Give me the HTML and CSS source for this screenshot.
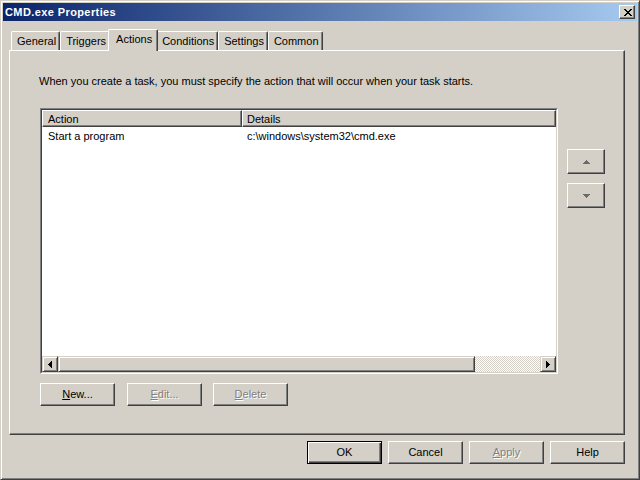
FILE: index.html
```html
<!DOCTYPE html>
<html lang="en">
<head>
<meta charset="utf-8">
<title>CMD.exe Properties</title>
<link rel="stylesheet" href="styles.css">
</head>
<body>
<div class="window">
  <div class="titlebar">
    <span class="title">CMD.exe Properties</span>
    <button class="close-btn" aria-label="Close">
      <svg width="8" height="7" viewBox="0 0 8 7" shape-rendering="crispEdges"><path d="M0 0h2v1H0zM6 0h2v1H6zM1 1h2v1H1zM5 1h2v1H5zM2 2h4v1H2zM3 3h2v1H3zM2 4h4v1H2zM1 5h2v1H1zM5 5h2v1H5zM0 6h2v1H0zM6 6h2v1H6z" fill="#000"/></svg>
    </button>
  </div>
  <div class="client">
    <div class="tabs">
      <div class="tab">General</div>
      <div class="tab">Triggers</div>
      <div class="tab selected">Actions</div>
      <div class="tab">Conditions</div>
      <div class="tab">Settings</div>
      <div class="tab">Common</div>
    </div>
    <div class="panel">
      <p class="intro">When you create a task, you must specify the action that will occur when your task starts.</p>
      <div class="content">
        <div class="listview">
          <div class="listview-inner">
            <div class="lv-header">
              <div class="lv-col col-action">Action</div>
              <div class="lv-col col-details">Details</div>
            </div>
            <div class="lv-body">
              <div class="lv-row">
                <div class="cell col-action">Start a program</div>
                <div class="cell col-details">c:\windows\system32\cmd.exe</div>
              </div>
            </div>
            <div class="hscroll">
              <div class="sb-btn"><svg width="4" height="7" viewBox="0 0 4 7" shape-rendering="crispEdges"><path d="M0 3h1v1H0zM1 2h1v3H1zM2 1h1v5H2zM3 0h1v7H3z" fill="#000"/></svg></div>
              <div class="sb-track"><div class="sb-thumb"></div></div>
              <div class="sb-btn"><svg width="4" height="7" viewBox="0 0 4 7" shape-rendering="crispEdges"><path d="M3 3h1v1H3zM2 2h1v3H2zM1 1h1v5H1zM0 0h1v7H0z" fill="#000"/></svg></div>
            </div>
          </div>
        </div>
        <div class="updown">
          <button class="btn arrow-btn" aria-label="Move up"><svg width="7" height="4" viewBox="0 0 7 4" shape-rendering="crispEdges"><path d="M3 0h1v1H3zM2 1h3v1H2zM1 2h5v1H1zM0 3h7v1H0z" fill="#6b6b6b"/></svg></button>
          <button class="btn arrow-btn" aria-label="Move down"><svg width="7" height="4" viewBox="0 0 7 4" shape-rendering="crispEdges"><path d="M0 0h7v1H0zM1 1h5v1H1zM2 2h3v1H2zM3 3h1v1H3z" fill="#6b6b6b"/></svg></button>
        </div>
      </div>
      <div class="task-buttons">
        <button class="btn btn-new"><u>N</u>ew...</button>
        <button class="btn disabled"><u>E</u>dit...</button>
        <button class="btn disabled"><u>D</u>elete</button>
      </div>
    </div>
    <div class="footer">
      <button class="btn default">OK</button>
      <button class="btn">Cancel</button>
      <button class="btn disabled"><u>A</u>pply</button>
      <button class="btn">Help</button>
    </div>
  </div>
</div>
</body>
</html>
```

FILE: styles.css
```css
html, body {
  margin: 0;
  padding: 0;
  background: #D4D0C8;
}

body {
  font-family: "Liberation Sans", Arial, sans-serif;
  font-size: 11px;
  color: #000;
}

.window {
  width: 640px;
  height: 480px;
  box-sizing: border-box;
  background: #D4D0C8;
  border: 1px solid;
  border-color: #D4D0C8 #404040 #404040 #D4D0C8;
  box-shadow: inset 1px 1px #fff, inset -1px -1px #808080;
  padding: 2px;
  display: flex;
  flex-direction: column;
}

.titlebar {
  height: 18px;
  flex: none;
  background: linear-gradient(to right, #0A246A, #A6CAF0);
  display: flex;
  align-items: center;
  justify-content: space-between;
  padding: 0 2px;
  color: #fff;
  font-weight: bold;
  letter-spacing: 0.4px;
}

.close-btn {
  width: 16px;
  height: 14px;
  box-sizing: border-box;
  padding: 0;
  margin: 0;
  background: #D4D0C8;
  border: 1px solid;
  border-color: #fff #404040 #404040 #fff;
  box-shadow: inset -1px -1px #808080;
  display: flex;
  align-items: center;
  justify-content: center;
}

.close-btn svg {
  display: block;
  margin-left: 1px;
}

.client {
  flex: 1;
  padding: 8px 12px 13px 6px;
  display: flex;
  flex-direction: column;
}

.tabs {
  display: flex;
  align-items: flex-end;
  height: 21px;
  padding-left: 2px;
  flex: none;
}

.tab {
  box-sizing: border-box;
  height: 19px;
  padding: 0 3px 0 5px;
  display: flex;
  align-items: center;
  background: #D4D0C8;
  border-top: 1px solid #fff;
  border-left: 1px solid #fff;
  border-right: 1px solid #404040;
  box-shadow: inset -1px 0 #808080;
  border-radius: 2px 2px 0 0;
  white-space: nowrap;
}

.tab.selected {
  position: relative;
  z-index: 1;
  height: 22px;
  margin: 0 -2px -1px;
  padding: 0 5px 3px 7px;
}

.panel {
  flex: 1;
  border: 1px solid;
  border-color: #fff #404040 #404040 #fff;
  box-shadow: inset -1px -1px #808080;
  padding: 24px 19px 0 30px;
  display: flex;
  flex-direction: column;
}

.intro {
  margin: 0 0 0 -1px;
  line-height: 13px;
}

.content {
  display: flex;
  gap: 9px;
  margin-top: 20px;
}

.listview {
  flex: 1;
  height: 266px;
  box-sizing: border-box;
  border: 1px solid;
  border-color: #808080 #fff #fff #808080;
}

.listview-inner {
  height: 100%;
  box-sizing: border-box;
  border: 1px solid;
  border-color: #404040 #D4D0C8 #D4D0C8 #404040;
  background: #fff;
  display: flex;
  flex-direction: column;
}

.lv-header {
  display: flex;
  height: 17px;
  flex: none;
}

.lv-col {
  box-sizing: border-box;
  height: 17px;
  line-height: 17px;
  background: #D4D0C8;
  border: 1px solid;
  border-color: #fff #404040 #404040 #fff;
  box-shadow: inset -1px -1px #808080;
  padding-left: 5px;
  overflow: hidden;
}

.lv-col.col-details {
  flex: 1;
  padding-left: 4px;
}

.col-action {
  width: 200px;
  flex: none;
}

.lv-body {
  flex: 1;
}

.lv-row {
  display: flex;
  height: 17px;
  line-height: 19px;
}

.cell.col-action {
  padding-left: 6px;
  box-sizing: border-box;
}

.cell.col-details {
  padding-left: 5px;
}

.hscroll {
  display: flex;
  height: 16px;
  flex: none;
}

.sb-btn,
.sb-thumb {
  box-sizing: border-box;
  height: 16px;
  background: #D4D0C8;
  border: 1px solid;
  border-color: #D4D0C8 #404040 #404040 #D4D0C8;
  box-shadow: inset 1px 1px #fff, inset -1px -1px #808080;
}

.sb-btn {
  width: 16px;
  flex: none;
  display: flex;
  align-items: center;
  justify-content: center;
}

.sb-btn svg {
  display: block;
}

.sb-track {
  flex: 1;
  display: flex;
  background: repeating-conic-gradient(#fff 0 25%, #D4D0C8 0 50%) 0 0 / 2px 2px;
}

.sb-thumb {
  width: 417px;
}

.updown {
  display: flex;
  flex-direction: column;
  gap: 9px;
  padding-top: 41px;
  width: 38px;
}

.btn {
  box-sizing: border-box;
  width: 75px;
  height: 23px;
  margin: 0;
  padding: 0 0 2px;
  background: #D4D0C8;
  border: 1px solid;
  border-color: #fff #404040 #404040 #fff;
  box-shadow: inset -1px -1px #808080;
  font-family: inherit;
  font-size: 11px;
  color: #000;
  display: flex;
  align-items: center;
  justify-content: center;
}

.btn svg {
  display: block;
}

.arrow-btn {
  width: 38px;
  height: 25px;
  padding: 0;
}

.btn.disabled {
  color: #808080;
  text-shadow: 1px 1px 0 #fff;
}

.btn.default {
  border-color: #000;
  box-shadow: inset 1px 1px #fff, inset -1px -1px #404040, inset -2px -2px #808080;
}

.task-buttons {
  display: flex;
  gap: 11px;
  margin-top: 9px;
}

.btn-new {
  margin-right: 1px;
}

.footer {
  display: flex;
  justify-content: flex-end;
  gap: 6px;
  margin-top: 6px;
  flex: none;
}
```
